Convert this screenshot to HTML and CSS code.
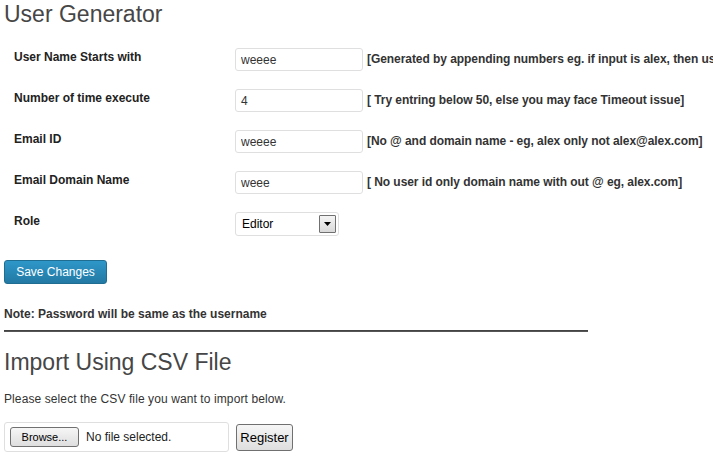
FILE: index.html
```html
<!DOCTYPE html>
<html>
<head>
<meta charset="utf-8">
<title>User Generator</title>
<link rel="stylesheet" href="styles.css">
</head>
<body>
<div class="wrap">
  <h2 class="title">User Generator</h2>
  <form class="gen-form">
    <table class="form-table">
      <tr>
        <th>User Name Starts with</th>
        <td><div class="field"><input class="text-input" type="text" value="weeee"><span class="desc">[Generated by appending numbers eg. if input is alex, then users will be alex1, alex2, alex3 ...]</span></div></td>
      </tr>
      <tr>
        <th>Number of time execute</th>
        <td><div class="field"><input class="text-input" type="text" value="4"><span class="desc">[ Try entring below 50, else you may face Timeout issue]</span></div></td>
      </tr>
      <tr>
        <th>Email ID</th>
        <td><div class="field"><input class="text-input" type="text" value="weeee"><span class="desc">[No @ and domain name - eg, alex only not alex@alex.com]</span></div></td>
      </tr>
      <tr>
        <th>Email Domain Name</th>
        <td><div class="field"><input class="text-input" type="text" value="weee"><span class="desc">[ No user id only domain name with out @ eg, alex.com]</span></div></td>
      </tr>
      <tr>
        <th>Role</th>
        <td><div class="field"><div class="select-wrap"><select class="role-select"><option>Editor</option><option>Author</option><option>Subscriber</option></select><span class="select-arrow"><svg width="7" height="4" viewBox="0 0 7 4"><path d="M0 0H7L3.5 4Z" fill="#000"/></svg></span></div></div></td>
      </tr>
    </table>
    <button class="btn-primary" type="button">Save Changes</button>
  </form>
  <p class="note">Note: Password will be same as the username</p>
  <hr class="divider">
  <h2 class="title title-import">Import Using CSV File</h2>
  <p class="intro">Please select the CSV file you want to import below.</p>
  <div class="upload-row">
    <div class="file-box"><span class="btn-native btn-browse">Browse...</span><span class="file-name">No file selected.</span></div>
    <button class="btn-native btn-register" type="button">Register</button>
  </div>
</div>
</body>
</html>
```

FILE: styles.css
```css
html, body {
  margin: 0;
  padding: 0;
  background: #fff;
  overflow: hidden;
}
body {
  font-family: "Liberation Sans", Arial, sans-serif;
  font-size: 12px;
  color: #333;
}
.wrap {
  padding: 0 4px;
}
.title {
  margin: 0;
  padding: 0;
  font-size: 23px;
  font-weight: normal;
  line-height: 29px;
  color: #464646;
}
.gen-form {
  margin: 0;
}
.form-table {
  border-collapse: collapse;
  table-layout: fixed;
  width: 1000px;
  margin-top: 10px;
}
.form-table th {
  width: 200px;
  padding: 10px;
  text-align: left;
  vertical-align: top;
  font-size: 12px;
  font-weight: bold;
  line-height: 16px;
  color: #222;
  white-space: nowrap;
}
.form-table td {
  padding: 8px 10px;
  vertical-align: top;
}
.field {
  display: flex;
  align-items: center;
  gap: 3px;
  white-space: nowrap;
}
.text-input {
  box-sizing: border-box;
  flex: none;
  width: 128px;
  height: 23px;
  margin: 1px;
  padding: 0 5px;
  border: 1px solid #dfdfdf;
  border-radius: 3px;
  font-family: "Liberation Sans", Arial, sans-serif;
  font-size: 12px;
  color: #333;
  background: #fff;
}
.desc {
  font-weight: bold;
  font-size: 12px;
  line-height: 15px;
  letter-spacing: -0.06px;
  color: #333;
}
.select-wrap {
  position: relative;
  margin: 1px;
}
.role-select {
  box-sizing: border-box;
  display: block;
  width: 104px;
  height: 24px;
  padding: 0 0 0 6px;
  border: 1px solid #dfdfdf;
  border-radius: 3px;
  background: #fff;
  -webkit-appearance: none;
  appearance: none;
  font-family: "Liberation Sans", Arial, sans-serif;
  font-size: 12px;
  color: #000;
}
.select-arrow {
  position: absolute;
  top: 3px;
  left: 84px;
  box-sizing: border-box;
  width: 17px;
  height: 18px;
  border: 1px solid #707070;
  border-radius: 1px;
  background: linear-gradient(#f4f4f4, #d9d9d9);
  display: flex;
  align-items: center;
  justify-content: center;
  pointer-events: none;
}
.btn-primary {
  display: block;
  box-sizing: border-box;
  width: 103px;
  height: 24px;
  margin-top: 15px;
  padding: 0;
  border: 1px solid #1f6d91;
  border-radius: 3px;
  background: linear-gradient(#2e97c9, #2279a3);
  color: #fff;
  font-family: "Liberation Sans", Arial, sans-serif;
  font-size: 12px;
}
.note {
  margin: 22px 0 0;
  font-weight: bold;
  font-size: 12px;
  line-height: 16px;
  color: #333;
}
.divider {
  width: 584px;
  height: 0;
  margin: 8px 0 0;
  border: 0;
  border-top: 1px solid #444;
  border-bottom: 1px solid #555;
}
.title-import {
  margin-top: 16px;
}
.intro {
  margin: 14px 0 0;
  font-size: 12px;
  line-height: 16px;
  letter-spacing: 0.1px;
  color: #333;
}
.upload-row {
  display: flex;
  align-items: center;
  gap: 7px;
  margin-top: 15px;
}
.file-box {
  box-sizing: border-box;
  width: 225px;
  height: 30px;
  display: flex;
  align-items: center;
  gap: 7px;
  padding: 0 5px;
  border: 1px solid #dfdfdf;
  border-radius: 3px;
}
.btn-native {
  box-sizing: border-box;
  display: inline-flex;
  align-items: center;
  justify-content: center;
  border: 1px solid #707070;
  border-radius: 3px;
  background: linear-gradient(#f6f6f6, #dedede);
  color: #000;
  font-family: "Liberation Sans", Arial, sans-serif;
  font-size: 12px;
}
.btn-browse {
  width: 69px;
  height: 20px;
  font-size: 11px;
}
.file-name {
  font-size: 12px;
  color: #222;
}
.btn-register {
  width: 57px;
  height: 27px;
  padding: 0;
  font-size: 13px;
}
```
